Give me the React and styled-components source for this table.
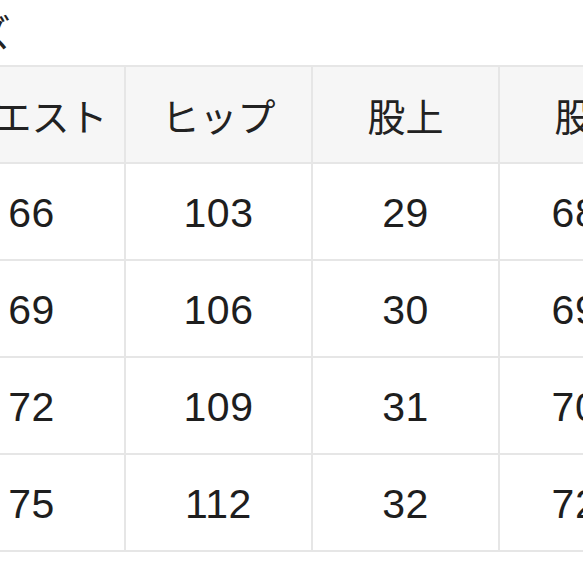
import React from "react";
import styled, { createGlobalStyle } from "styled-components";

const Global = createGlobalStyle`
  html, body {
    margin: 0;
    padding: 0;
    background: #ffffff;
    overflow: hidden;
  }
  body {
    width: 583px;
    height: 583px;
    font-family: "Noto Sans CJK JP", "Noto Sans", sans-serif;
    color: #222222;
  }
`;

const Page = styled.div`
  width: 760px;
  margin-left: -63px;
  display: flex;
  flex-direction: column;
`;

const Title = styled.h2`
  margin: 0 0 5px -39px;
  height: 60px;
  line-height: 62px;
  font-size: 38px;
  font-weight: 400;
  color: #222222;
`;

const Grid = styled.div`
  display: grid;
  grid-template-columns: repeat(4, 185px);
  grid-auto-rows: 95px;
  gap: 2px;
  padding: 2px;
  background: #e6e6e6;
  width: max-content;
`;

const Cell = styled.div`
  display: flex;
  align-items: center;
  justify-content: center;
  padding-top: ${(p) => (p.$head ? "0" : "3px")};
  background: ${(p) => (p.$head ? "#f6f6f6" : "#ffffff")};
  font-family: ${(p) =>
    p.$head
      ? '"Noto Sans CJK JP", sans-serif'
      : '"Liberation Sans", "Noto Sans CJK JP", sans-serif'};
  font-size: ${(p) => (p.$head ? "38px" : "41px")};
  letter-spacing: ${(p) => (p.$head ? "0" : "0.5px")};
  color: ${(p) => (p.$head ? "#222222" : "#1e1e1e")};
  white-space: nowrap;
`;

const headers = ["ウエスト", "ヒップ", "股上", "股下"];
const rows = [
  ["66", "103", "29", "68.5"],
  ["69", "106", "30", "69.5"],
  ["72", "109", "31", "70.5"],
  ["75", "112", "32", "72.5"],
];

export default function App() {
  return (
    <>
      <Global />
      <Page>
        <Title>サイズ</Title>
        <Grid>
          {headers.map((h) => (
            <Cell key={h} $head>
              {h}
            </Cell>
          ))}
          {rows.map((r, i) =>
            r.map((v, j) => <Cell key={`${i}-${j}`}>{v}</Cell>)
          )}
        </Grid>
      </Page>
    </>
  );
}
